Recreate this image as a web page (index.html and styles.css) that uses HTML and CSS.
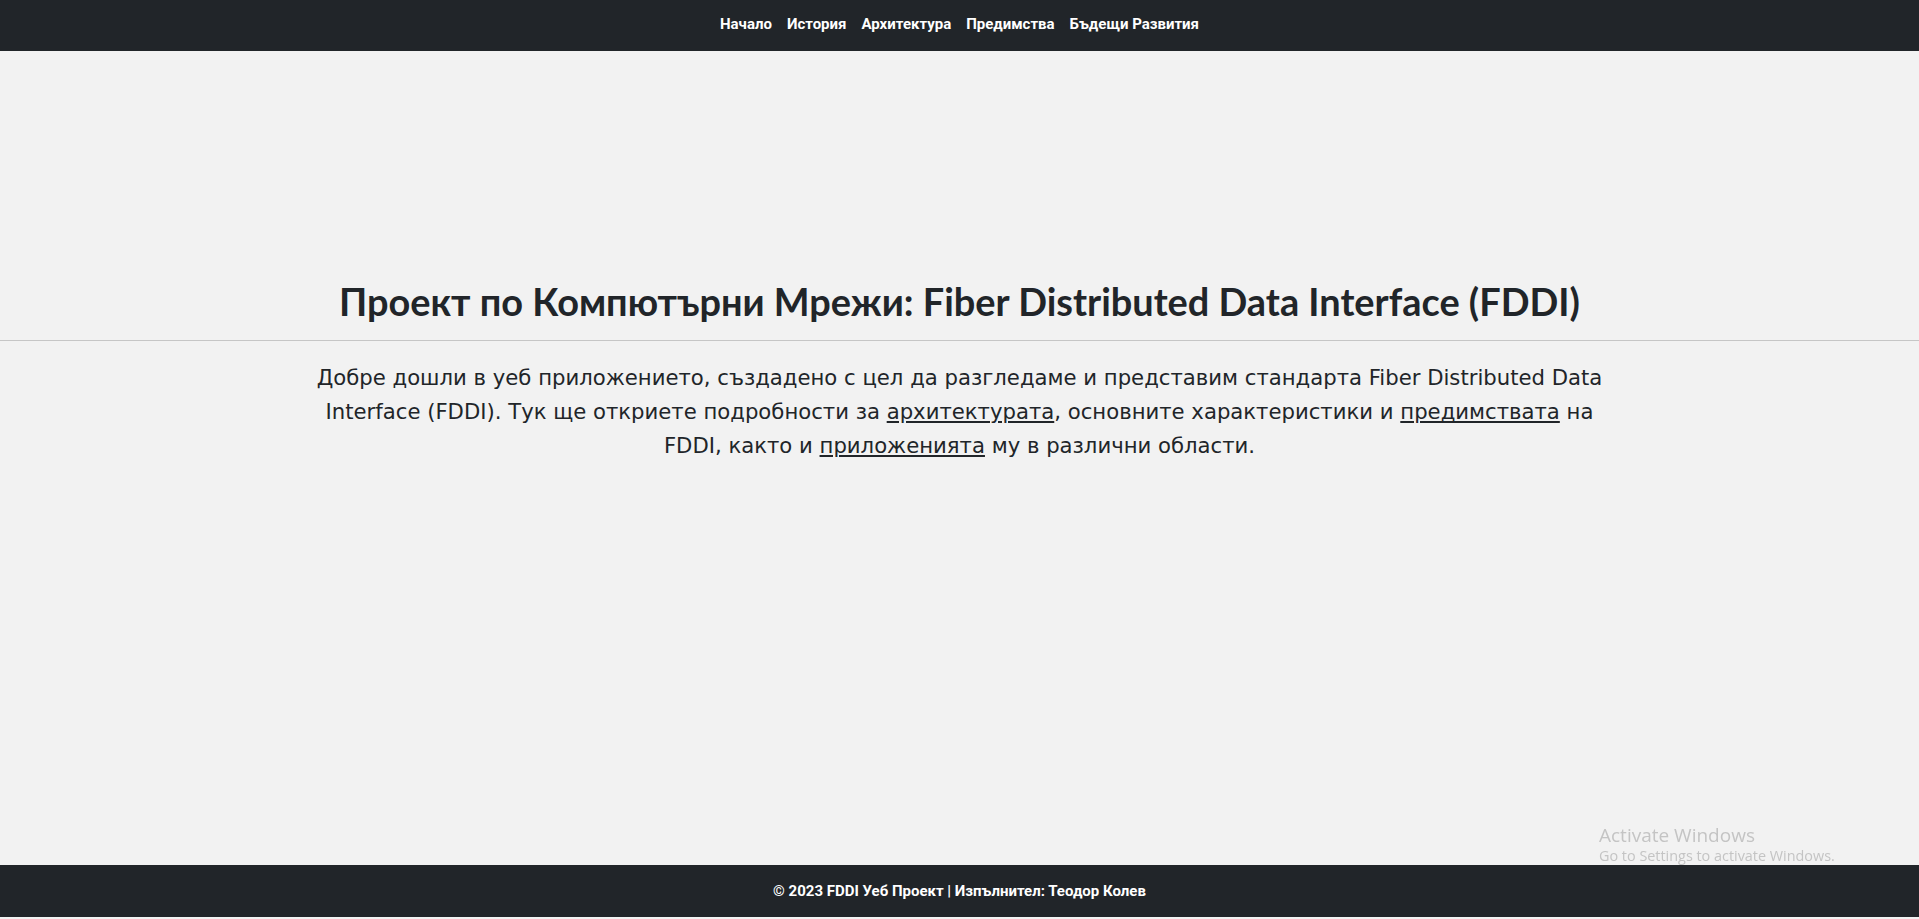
FILE: index.html
```html
<!DOCTYPE html>
<html lang="bg">
<head>
<meta charset="utf-8">
<title>FDDI</title>
<link rel="stylesheet" href="styles.css">
</head>
<body>
<nav class="topnav">
  <a href="#">Начало</a>
  <a href="#">История</a>
  <a href="#">Архитектура</a>
  <a href="#">Предимства</a>
  <a href="#">Бъдещи Развития</a>
</nav>
<main class="main">
  <h1 class="title">Проект по Компютърни Мрежи: Fiber Distributed Data Interface (FDDI)</h1>
  <hr class="rule">
  <p class="intro">Добре дошли в уеб приложението, създадено с цел да разгледаме и представим стандарта Fiber Distributed Data Interface (FDDI). Тук ще откриете подробности за <a href="#">архитектурата</a>, основните характеристики и <a href="#">предимствата</a> на FDDI, както и <a href="#">приложенията</a> му в различни области.</p>
</main>
<div class="watermark">
  <div class="wm-title">Activate Windows</div>
  <div class="wm-sub">Go to Settings to activate Windows.</div>
</div>
<footer class="footer">© 2023 FDDI Уеб Проект | Изпълнител: Теодор Колев</footer>
</body>
</html>
```
FILE: styles.css
```css
html, body {
  margin: 0;
  padding: 0;
  height: 100%;
}
body {
  background: #f2f2f2;
  color: #212529;
  display: flex;
  flex-direction: column;
  min-height: 919px;
}
.topnav {
  background: #212529;
  height: 51px;
  display: flex;
  justify-content: center;
  align-items: center;
  gap: 15px;
  padding-bottom: 4px;
  box-sizing: border-box;
  font-family: Roboto, "Liberation Sans", sans-serif;
  font-weight: 700;
  font-size: 15px;
  flex-shrink: 0;
}
.topnav a {
  color: #ffffff;
  text-decoration: none;
}
.main {
  flex: 1;
  padding-top: 228px;
}
.title {
  font-family: Lato, "Open Sans", sans-serif;
  font-weight: 700;
  font-size: 37.9px;
  line-height: 1.2;
  text-align: center;
  margin: 0 0 16px 0;
  color: #212529;
}
.rule {
  border: none;
  border-top: 1px solid #c6c6c6;
  margin: 0;
  width: 100%;
}
.intro {
  font-family: "DejaVu Sans", Verdana, sans-serif;
  font-size: 21.2px;
  line-height: 34px;
  text-align: center;
  max-width: 1320px;
  margin: 20px auto 0 auto;
}
.intro a {
  color: #212529;
  text-decoration: underline;
}
.watermark {
  position: fixed;
  left: 1599px;
  top: 823px;
  z-index: 1;
  color: #c4c4c4;
  font-family: "Open Sans", sans-serif;
}
.wm-title {
  font-size: 19px;
  line-height: 24px;
}
.wm-sub {
  font-size: 14.4px;
  line-height: 18px;
}
.footer {
  position: relative;
  z-index: 2;
  background: #212529;
  color: #ffffff;
  height: 52px;
  margin-bottom: 2px;
  display: flex;
  align-items: center;
  justify-content: center;
  font-family: Roboto, "Liberation Sans", sans-serif;
  font-weight: 700;
  font-size: 15px;
  flex-shrink: 0;
}
```
